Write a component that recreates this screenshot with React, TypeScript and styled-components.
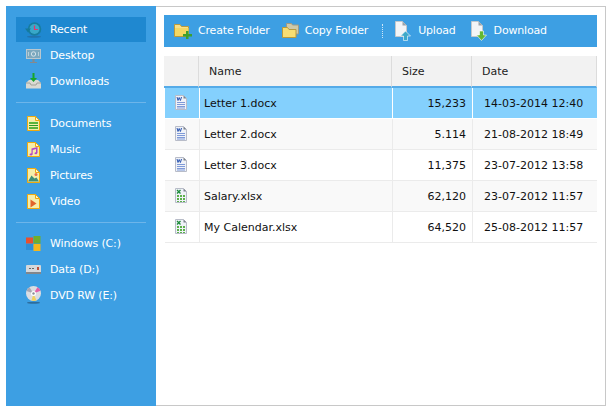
import React from "react";
import styled, { createGlobalStyle } from "styled-components";

const Global = createGlobalStyle`
  html, body { margin: 0; padding: 0; background: #fff; }
  body { font-family: "DejaVu Sans", sans-serif; font-size: 11px; }
`;

const Frame = styled.div`
  box-sizing: border-box;
  width: 600px;
  height: 400px;
  margin: 6px 0 0 6px;
  border-top: 1px solid #c8c8c8;
  border-right: 1px solid #c8c8c8;
  border-bottom: 1px solid #c8c8c8;
  display: flex;
  background: #fff;
`;

const Sidebar = styled.nav`
  box-sizing: border-box;
  width: 150px;
  margin: -1px 0;
  background: #3d9fe3;
  padding: 10px 10px 0;
  flex: none;
`;

const Group = styled.div`
  display: flex;
  flex-direction: column;
  padding-bottom: 8px;
  margin-bottom: 7px;
  border-bottom: 1px solid #6db5ea;
  &:last-child { border-bottom: 0; }
`;

const NavItem = styled.div<{ $active?: boolean }>`
  height: 25px;
  margin-top: 1px;
  display: flex;
  align-items: center;
  background: ${(p) => (p.$active ? "#1f88d0" : "transparent")};
  color: #fff;
  font-size: 11px;
  letter-spacing: -0.15px;
`;

const NavIcon = styled.span`
  width: 34px;
  display: flex;
  justify-content: center;
  flex: none;
`;

const Main = styled.main`
  flex: 1;
  padding: 8px 8px 0;
  min-width: 0;
`;

const Toolbar = styled.div`
  height: 32px;
  background: #3d9fe3;
  display: flex;
  align-items: center;
  padding-left: 10px;
  color: #fff;
  margin-bottom: 9px;
`;

const ToolButton = styled.div<{ $gap: number; $iconGap: number }>`
  display: flex;
  align-items: center;
  gap: ${(p) => p.$iconGap}px;
  margin-right: ${(p) => p.$gap}px;
  font-size: 11px;
  letter-spacing: -0.18px;
`;

const ToolLabel = styled.span`
  padding-bottom: 2px;
`;

const ToolSep = styled.span`
  height: 14px;
  border-left: 1px dotted #cfe6f7;
  margin-right: 12px;
`;

const HeadRow = styled.div`
  display: grid;
  grid-template-columns: 35px 193px 80px 125px;
  color: #222;
`;

const HeadCell = styled.div`
  box-sizing: border-box;
  height: 32px;
  background: #f2f2f2;
  border-bottom: 2px solid #55abe8;
  border-right: 1px solid #dcdcdc;
  display: flex;
  align-items: center;
  padding-left: 10px;
`;

const Row = styled.div<{ $sel: boolean; $alt: boolean }>`
  display: grid;
  grid-template-columns: 35px 193px 80px 124px;
  margin-left: 1px;
  height: 31px;
  box-sizing: border-box;
  color: #111;
  background: ${(p) => (p.$sel ? "#84d0fd" : p.$alt ? "#f9f9f9" : "#fff")};
  border-bottom: 1px solid ${(p) => (p.$sel ? "#fff" : "#ebebeb")};
  --divider: ${(p) => (p.$sel ? "#fff" : "#ebebeb")};
`;

const IconCell = styled.div`
  border-right: 1px solid var(--divider);
  display: flex;
  align-items: flex-start;
  justify-content: center;
  padding: 7px 2px 0 0;
`;

const NameCell = styled.div`
  border-right: 1px solid var(--divider);
  display: flex;
  align-items: center;
  padding-left: 4px;
`;

const SizeCell = styled.div`
  border-right: 1px solid var(--divider);
  display: flex;
  align-items: center;
  justify-content: flex-end;
  padding-right: 6px;
`;

const DateCell = styled.div`
  display: flex;
  align-items: center;
  padding-left: 11px;
`;

const Recent = () => (
  <svg width="17" height="17" viewBox="0 0 17 17">
    <ellipse cx="9" cy="15.800" rx="7" ry="1" fill="#2273ad" />
    <circle cx="9.500" cy="8" r="6.800" fill="#177d9f" />
    <circle cx="9.500" cy="8" r="5" fill="#39a8c8" />
    <path d="M0 7.500h6L3 11.500z" fill="#147a9c" />
    <path d="M9.500 4.500V8.500H13" fill="none" stroke="#e8326e" strokeWidth="1.200" />
  </svg>
);
const Desktop = () => (
  <svg width="15" height="15" viewBox="0 0 15 15">
    <rect x="0" y="1" width="15" height="10" fill="#b9c7cf" />
    <rect x="1" y="2" width="13" height="8" fill="#7ca8be" />
    <circle cx="7.500" cy="6" r="2.200" fill="none" stroke="#d5e3ea" />
    <path d="M2.500 4v4M12.500 4v4" stroke="#b6cfdb" />
    <rect x="6.500" y="11" width="2" height="3" fill="#84898e" />
    <rect x="4" y="14" width="7" height="1" fill="#84898e" />
  </svg>
);
const Downloads = () => (
  <svg width="15" height="17" viewBox="0 0 15 17">
    <path d="M0 10l3-3h9l3 3v5.500H0z" fill="#d9d9d2" />
    <path d="M0 10h4l1 2h5l1-2h4" fill="none" stroke="#a2a29a" />
    <path d="M6.500 0h2v5h2.500L7.500 9 4 5h2.500z" fill="#17a62a" />
  </svg>
);
const FileBase = ({ children }: { children?: React.ReactNode }) => (
  <svg width="13" height="15" viewBox="0 0 13 15">
    <path d="M.5.500h8l4 4v10H.5z" fill="#f6eeaa" stroke="#eeaa10" />
    <path d="M8.500.500v4h4z" fill="#fff5cb" stroke="#eeaa10" />
    {children}
  </svg>
);
const Documents = () => (
  <FileBase>
    <rect x="2" y="6" width="9" height="2" fill="#5ab53e" />
    <rect x="2" y="9" width="9" height="1" fill="#2c9a2c" />
    <rect x="2" y="11" width="9" height="2" fill="#5ab53e" />
  </FileBase>
);
const Music = () => (
  <FileBase>
    <path d="M4.500 6.500l6-1.500v6l-1 1.300-2-.3.300-1.500 1.200-.3V7L5.700 8v4.500l-1.200 1-2-.3.300-1.500 1.700-.4z" fill="#b246c8" />
  </FileBase>
);
const Pictures = () => (
  <FileBase>
    <path d="M1 13.500l3.500-6 3 3 2-1 2.500 4z" fill="#3f8f78" />
    <circle cx="9" cy="6.500" r="1.500" fill="#e8704a" />
  </FileBase>
);
const Video = () => (
  <FileBase>
    <path d="M3.500 5.500l6 4-6 4z" fill="#e2642b" />
  </FileBase>
);
const Windows = () => (
  <svg width="15" height="15" viewBox="0 0 15 15">
    <rect x="0" y="1.500" width="7" height="6" fill="#e8502f" />
    <rect x="7.500" y="0" width="7" height="7.500" fill="#6fae2d" />
    <rect x="0" y="8" width="7" height="6" fill="#2d8fd8" />
    <rect x="7.500" y="8" width="7" height="7" fill="#f5b71a" />
  </svg>
);
const Drive = () => (
  <svg width="15" height="9" viewBox="0 0 15 9">
    <rect x="0" y="0" width="15" height="9" rx="1" fill="#d5d8db" />
    <rect x="0" y="7" width="15" height="2" fill="#82868b" />
    <rect x="3" y="3" width="2" height="1" fill="#666" />
    <rect x="6" y="3" width="2" height="1" fill="#666" />
    <rect x="11" y="2" width="2" height="3" fill="#c0503a" />
  </svg>
);
const Dvd = () => (
  <svg width="15" height="19" viewBox="0 0 15 19">
    <ellipse cx="7.500" cy="16.800" rx="6.500" ry="1" fill="#2c6d9e" />
    <circle cx="7.500" cy="7.500" r="7.500" fill="#dcdde2" />
    <path d="M7.500 7.500L11.500 1.200a7.500 7.500 0 0 1 3 3.500z" fill="#e55fa8" />
    <path d="M7.500 7.500L.5 5a7.500 7.500 0 0 1 3-3.700z" fill="#a8a8b4" />
    <path d="M7.500 7.500l-2 7a7.500 7.500 0 0 0 5 0z" fill="#f0d060" />
    <circle cx="7.500" cy="7.500" r="2.500" fill="#fff" />
    <circle cx="7.500" cy="7.500" r="1.200" fill="#8a8f98" />
  </svg>
);

const NewFolder = () => (
  <svg width="18" height="16" viewBox="0 -1 18 16">
    <path d="M.5.500h5.500l1.500 2h7v10H.5z" fill="#f9e088" stroke="#b99a3c" />
    <path d="M1 4h13.500v8H1z" fill="#f5d862" />
    <path d="M12 7h2.500v3H18v2.500h-3.500V15H12v-2.500H9V10h3z" fill="#3da02e" />
  </svg>
);
const CopyFolderIcon = () => (
  <svg width="17" height="16" viewBox="0 0 17 16">
    <path d="M4.500.500h5l1 1.500h6v9h-12z" fill="#cfc9a8" stroke="#9d9a84" />
    <path d="M.5 4.500h5l1.500 2h7v8H.5z" fill="#f7de73" stroke="#b99a3c" />
  </svg>
);
const PageBadge = ({ color, up }: { color: string; up?: boolean }) => (
  <svg width="16" height="22" viewBox="0 -1 16 22">
    <path d="M.5.500h7l4 4v11H.5z" fill="#f3f5f7" stroke="#c3c8cc" />
    <path d="M7.500.500v4h4z" fill="#9aa3aa" />
    {up ? (
      <path d="M10.500 10l5 5h-3v4.500h-4V15h-3z" fill={color} stroke="#fff" strokeWidth=".6" />
    ) : (
      <path d="M8.500 10h4v4h3l-5 5.500-5-5.500h3z" fill={color} stroke="#fff" strokeWidth=".6" />
    )}
  </svg>
);
const FileIcon = ({ kind }: { kind: "w" | "x" }) => (
  <svg width="12" height="15" viewBox="0 0 12 15">
    <path d="M.5.500h8l3 3v11H.5z" fill="#eff2f8" stroke="#b8bcc8" />
    <path d="M8.500.500v3h3z" fill="#7d828c" />
    {kind === "w" ? (
      <>
        <path d="M2 2l1 3.500 1.200-3 1.200 3L6.500 2" fill="none" stroke="#2b55b0" />
        <path d="M2 7.500h8M2 9.500h8M2 11.500h8M2 13h8" stroke="#7f9ad8" />
      </>
    ) : (
      <>
        <path d="M2 2l3.500 3.500M5.500 2L2 5.500" stroke="#1c8a3a" strokeWidth="1.300" />
        <path d="M2 7h2v2H2zM5 7h2v2H5zM8 7h2v2H8zM2 10h2v2H2zM5 10h2v2H5zM8 10h2v2H8zM2 13h2v1H2zM5 13h2v1H5zM8 13h2v1H8z" fill="#5bb04a" />
      </>
    )}
  </svg>
);

const groups = [
  [
    { label: "Recent", icon: <Recent />, active: true },
    { label: "Desktop", icon: <Desktop /> },
    { label: "Downloads", icon: <Downloads /> },
  ],
  [
    { label: "Documents", icon: <Documents /> },
    { label: "Music", icon: <Music /> },
    { label: "Pictures", icon: <Pictures /> },
    { label: "Video", icon: <Video /> },
  ],
  [
    { label: "Windows (C:)", icon: <Windows /> },
    { label: "Data (D:)", icon: <Drive /> },
    { label: "DVD RW (E:)", icon: <Dvd /> },
  ],
];

const files: { kind: "w" | "x"; name: string; size: string; date: string }[] = [
  { kind: "w", name: "Letter 1.docx", size: "15,233", date: "14-03-2014 12:40" },
  { kind: "w", name: "Letter 2.docx", size: "5.114", date: "21-08-2012 18:49" },
  { kind: "w", name: "Letter 3.docx", size: "11,375", date: "23-07-2012 13:58" },
  { kind: "x", name: "Salary.xlsx", size: "62,120", date: "23-07-2012 11:57" },
  { kind: "x", name: "My Calendar.xlsx", size: "64,520", date: "25-08-2012 11:57" },
];

export default function App() {
  return (
    <>
      <Global />
      <Frame>
        <Sidebar>
          {groups.map((g, i) => (
            <Group key={i}>
              {g.map((it) => (
                <NavItem key={it.label} $active={it.active}>
                  <NavIcon>{it.icon}</NavIcon>
                  {it.label}
                </NavItem>
              ))}
            </Group>
          ))}
        </Sidebar>
        <Main>
          <Toolbar>
            <ToolButton $gap={12} $iconGap={6}><NewFolder /><ToolLabel>Create Folder</ToolLabel></ToolButton>
            <ToolButton $gap={14} $iconGap={6}><CopyFolderIcon /><ToolLabel>Copy Folder</ToolLabel></ToolButton>
            <ToolSep />
            <ToolButton $gap={15} $iconGap={7}><PageBadge color="#3fa9c9" up /><ToolLabel>Upload</ToolLabel></ToolButton>
            <ToolButton $gap={0} $iconGap={7}><PageBadge color="#62b832" /><ToolLabel>Download</ToolLabel></ToolButton>
          </Toolbar>
          <HeadRow>
            <HeadCell />
            <HeadCell>Name</HeadCell>
            <HeadCell>Size</HeadCell>
            <HeadCell>Date</HeadCell>
          </HeadRow>
          {files.map((f, i) => (
            <Row key={f.name} $sel={i === 0} $alt={i % 2 === 1}>
              <IconCell><FileIcon kind={f.kind} /></IconCell>
              <NameCell>{f.name}</NameCell>
              <SizeCell>{f.size}</SizeCell>
              <DateCell>{f.date}</DateCell>
            </Row>
          ))}
        </Main>
      </Frame>
    </>
  );
}
